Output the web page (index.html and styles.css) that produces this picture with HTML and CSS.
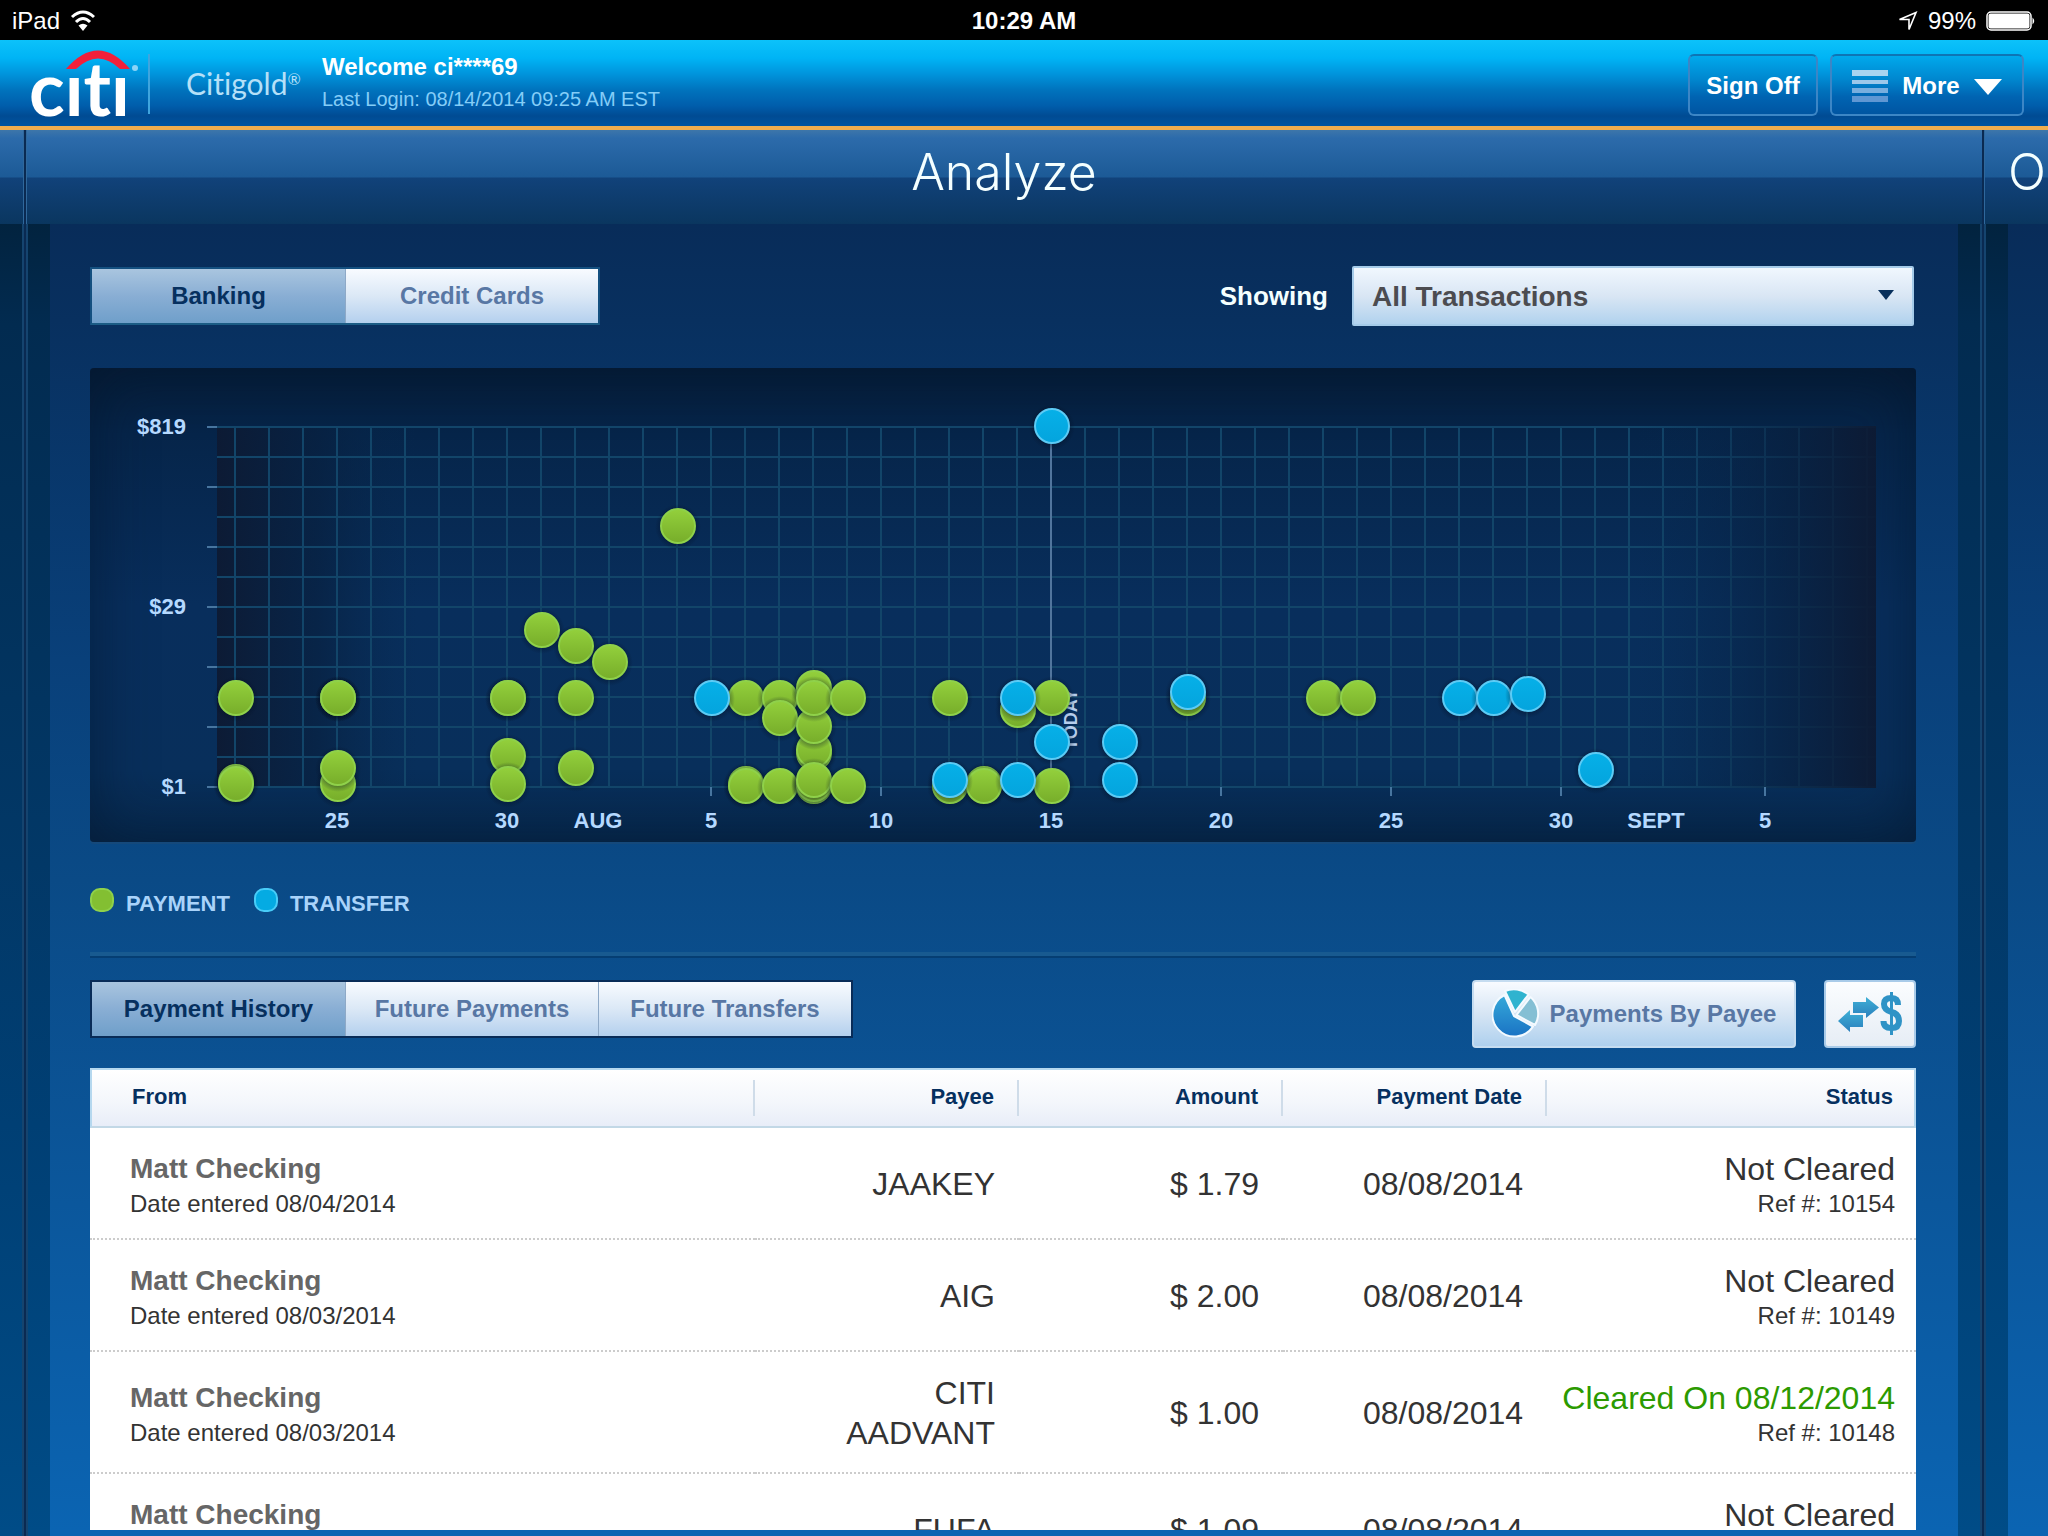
FILE: index.html
```html
<!DOCTYPE html>
<html lang="en">
<head>
<meta charset="utf-8">
<meta name="viewport" content="width=device-width, initial-scale=1">
<title>Citi - Analyze</title>
<link rel="stylesheet" href="styles.css">
</head>
<body>
<div class="status-bar">
  <div class="status-left">
    <span>iPad</span>
    <svg width="26" height="24" viewBox="0 0 26 24" fill="none" stroke="#fff" stroke-width="3" aria-hidden="true">
      <path d="M2 8Q13 -2 24 8"/><path d="M6 13Q13 6 20 13"/><path d="M13 22L8.500 16.500Q13 13 17.500 16.500Z" fill="#fff" stroke="none"/>
    </svg>
  </div>
  <div class="status-time">10:29 AM</div>
  <div class="status-right">
    <svg width="20" height="20" viewBox="0 0 20 20" fill="none" stroke="#fff" stroke-width="1.600" aria-hidden="true"><path d="M1.500 8.500L18 1.500L11 18.500V8.500Z"/></svg>
    <span>99%</span>
    <svg width="50" height="20" viewBox="0 0 50 20" aria-hidden="true"><rect x="1" y="1" width="44" height="18" rx="4" fill="none" stroke="#fff" stroke-width="1.500"/><rect x="2.500" y="2.500" width="41" height="15" rx="2" fill="#fff"/><path d="M46.500 6.500Q50 10 46.500 13.500Z" fill="#fff"/></svg>
  </div>
</div>

<header class="app-header">
  <svg class="logo" width="126" height="80" viewBox="0 0 126 80" role="img" aria-label="Citi">
    <path d="M42 24Q74 -13 106 24L96 24Q74 3 52 24Z" fill="#f2203a"/>
    <text x="5" y="71" class="logo-text">cıtı</text>
    <circle cx="111" cy="23" r="3" fill="#8bd4f7"/>
    <path d="M125 9V69" stroke="#3fa5de" stroke-width="2"/>
  </svg>
  <span class="brand">Citigold<sup>®</sup></span>
  <div class="welcome">
    <strong>Welcome ci****69</strong>
    <span>Last Login: 08/14/2014 09:25 AM EST</span>
  </div>
  <div class="header-actions">
    <button type="button" class="header-button">Sign Off</button>
    <button type="button" class="header-button more">
      <svg width="36" height="33" viewBox="0 0 36 33" aria-hidden="true"><path d="M0 0H36V6H0Z" fill="#a8d4f0"/><path d="M0 10H36V14H0Z" fill="#9cc8ea"/><path d="M0 18H36V23H0Z" fill="#78aede"/><path d="M0 26H36V32H0Z" fill="#5f97d3"/></svg>
      More
      <svg width="28" height="17" viewBox="0 0 28 17" aria-hidden="true"><path d="M0 1H28L14 17Z" fill="#fff"/></svg>
    </button>
  </div>
</header>

<div class="carousel">
  <div class="page previous"><div class="page-head"></div><div class="gutter line-right"></div></div>
  <main class="page">
    <div class="page-head"><h1>Analyze</h1></div>
    <div class="page-body">
      <div class="gutter line-left"></div>
      <div class="content">
        <div class="toolbar">
          <div class="tabs" role="group" aria-label="Account type">
            <button type="button" class="tab active">Banking</button>
            <button type="button" class="tab">Credit Cards</button>
          </div>
          <div class="filter">
            <label for="showing">Showing</label>
            <div class="select-box">
              <select id="showing"><option>All Transactions</option></select>
              <svg width="16" height="10" viewBox="0 0 16 10" aria-hidden="true"><path d="M0 0H16L8 10Z" fill="#08305c"/></svg>
            </div>
          </div>
        </div>

        <div class="chart">
          <svg viewBox="0 0 1826 474" role="img" aria-label="Transactions by date and amount">
            <defs>
              <linearGradient id="green" x1="0" y1="0" x2="0" y2="1"><stop offset="0" stop-color="#93d03c"/><stop offset="1" stop-color="#77ad2a"/></linearGradient>
              <linearGradient id="blue" x1="0" y1="0" x2="0" y2="1"><stop offset="0" stop-color="#06b0e8"/><stop offset="1" stop-color="#04a4dd"/></linearGradient>
              <radialGradient id="shade"><stop offset=".7" stop-color="#020e22" stop-opacity=".4"/><stop offset="1" stop-color="#020e22" stop-opacity="0"/></radialGradient>
              <linearGradient id="fadeLeft"><stop offset="0" stop-color="#0d1a33" stop-opacity=".95"/><stop offset=".5" stop-color="#08203f" stop-opacity=".7"/><stop offset="1" stop-color="#072a50" stop-opacity="0"/></linearGradient>
              <linearGradient id="fadeRight"><stop offset="0" stop-color="#072a50" stop-opacity="0"/><stop offset=".6" stop-color="#08203f" stop-opacity=".6"/><stop offset="1" stop-color="#0d1a33" stop-opacity=".95"/></linearGradient>
              <pattern id="columns" x="144" y="59" width="34" height="30" patternUnits="userSpaceOnUse"><path d="M1 0V30" stroke="#124569" stroke-width="2"/></pattern>
              <pattern id="rows" x="0" y="58" width="34" height="30" patternUnits="userSpaceOnUse"><path d="M0 1H34" stroke="#124569" stroke-width="2"/></pattern>
              <g id="p"><circle r="23" cx="1" cy="1" fill="url(#shade)"/><circle cx="1" r="17" fill="url(#green)" stroke="#8fd14a" stroke-width="2"/></g>
              <g id="t"><circle r="23" cx="1" cy="1" fill="url(#shade)"/><circle cx="1" r="17" fill="url(#blue)" stroke="#5ccbf5" stroke-width="2"/></g>
            </defs>
            <rect x="127" y="59" width="200" height="360" fill="url(#fadeLeft)"/>
            <rect x="127" y="59" width="1659" height="360" fill="url(#columns)"/>
            <rect x="127" y="58" width="1659" height="362" fill="url(#rows)"/>
            <rect x="1546" y="58" width="240" height="362" fill="url(#fadeRight)"/>
            <path d="M117 59H127M117 119H127M117 179H127M117 239H127M117 299H127M117 359H127M117 419H127" class="ticks"/>
            <path d="M621 419V428M791 419V428M961 419V428M1131 419V428M1301 419V428M1471 419V428M1675 419V428" class="ticks"/>
            <path d="M961 59V419" stroke="#51759d" stroke-width="2"/>
            <text transform="translate(987 382) rotate(-90)" class="today">TODAY</text>
            <g class="axis end"><text x="96" y="66">$819</text><text x="96" y="246">$29</text><text x="96" y="426">$1</text></g>
            <g class="axis mid"><text x="247" y="460">25</text><text x="417" y="460">30</text><text x="508" y="460">AUG</text><text x="621" y="460">5</text><text x="791" y="460">10</text><text x="961" y="460">15</text><text x="1131" y="460">20</text><text x="1301" y="460">25</text><text x="1471" y="460">30</text><text x="1566" y="460">SEPT</text><text x="1675" y="460">5</text></g>
            <g>
              <use href="#p" x="145" y="330"/><use href="#p" x="145" y="414"/><use href="#p" x="145" y="416"/>
              <use href="#p" x="247" y="330"/><use href="#p" x="247" y="330"/><use href="#p" x="247" y="330"/><use href="#p" x="247" y="416"/><use href="#p" x="247" y="400"/>
              <use href="#p" x="417" y="330"/><use href="#p" x="417" y="330"/><use href="#p" x="417" y="388"/><use href="#p" x="417" y="416"/>
              <use href="#p" x="451" y="262"/>
              <use href="#p" x="485" y="278"/><use href="#p" x="485" y="330"/><use href="#p" x="485" y="400"/>
              <use href="#p" x="519" y="294"/><use href="#p" x="587" y="158"/>
              <use href="#p" x="655" y="330"/><use href="#p" x="655" y="416"/><use href="#p" x="655" y="418"/>
              <use href="#p" x="689" y="330"/><use href="#p" x="689" y="350"/><use href="#p" x="689" y="418"/>
              <use href="#p" x="723" y="320"/><use href="#p" x="723" y="385"/><use href="#p" x="723" y="382"/><use href="#p" x="723" y="358"/><use href="#p" x="723" y="330"/><use href="#p" x="723" y="418"/><use href="#p" x="723" y="416"/><use href="#p" x="723" y="412"/>
              <use href="#p" x="757" y="330"/><use href="#p" x="757" y="418"/>
              <use href="#p" x="859" y="330"/><use href="#p" x="859" y="418"/>
              <use href="#p" x="893" y="416"/><use href="#p" x="893" y="418"/>
              <use href="#p" x="927" y="342"/>
              <use href="#p" x="961" y="330"/><use href="#p" x="961" y="418"/>
              <use href="#p" x="1097" y="330"/><use href="#p" x="1233" y="330"/><use href="#p" x="1267" y="330"/>
            </g>
            <g>
              <use href="#t" x="621" y="330"/><use href="#t" x="859" y="412"/><use href="#t" x="927" y="330"/><use href="#t" x="927" y="412"/>
              <use href="#t" x="961" y="58"/><use href="#t" x="961" y="374"/><use href="#t" x="1029" y="374"/><use href="#t" x="1029" y="412"/>
              <use href="#t" x="1097" y="324"/><use href="#t" x="1369" y="330"/><use href="#t" x="1403" y="330"/><use href="#t" x="1437" y="326"/><use href="#t" x="1505" y="402"/>
            </g>
          </svg>
        </div>

        <ul class="legend">
          <li><span class="swatch payment"></span>PAYMENT</li>
          <li><span class="swatch transfer"></span>TRANSFER</li>
        </ul>
        <hr>

        <div class="toolbar lower">
          <div class="tabs dark" role="group" aria-label="Activity">
            <button type="button" class="tab active">Payment History</button>
            <button type="button" class="tab">Future Payments</button>
            <button type="button" class="tab">Future Transfers</button>
          </div>
          <div class="tools">
            <button type="button" class="tool payee">
              <svg width="48" height="50" viewBox="0 0 48 50" aria-hidden="true">
                <defs><linearGradient id="pie" x1="0" y1="0" x2="0" y2="1"><stop offset="0" stop-color="#36a9d9"/><stop offset="1" stop-color="#1a73c4"/></linearGradient></defs>
                <g stroke="#f4faff" stroke-width="2" stroke-linejoin="round"><path d="M22 27L12.500 6A22 22 0 1 0 41 37.500Z" fill="url(#pie)"/><path d="M23 23L13 2A23 23 0 0 1 36.500 5.500Z" fill="#2fb3cf"/><path d="M24.500 26L38.500 8A22 22 0 0 1 43 36Z" fill="#84bfd4"/></g>
              </svg>
              Payments By Payee
            </button>
            <button type="button" class="tool money" aria-label="Transfer money">
              <svg width="64" height="44" viewBox="0 0 64 44" aria-hidden="true">
                <defs><linearGradient id="tone" x1="0" y1="0" x2="0" y2="1"><stop offset="0" stop-color="#3fb0d6"/><stop offset="1" stop-color="#2a7fbd"/></linearGradient></defs>
                <path d="M15 10H28V5L41 15.500L28 26V21H15Z" fill="url(#tone)"/><path d="M25 23V35H12V40L0 29L12 18V23Z" fill="url(#tone)"/>
                <path d="M60 13Q60 6 53.500 6Q46 6 46 12Q46 18 53.500 20Q61 22 61 29Q61 36 53.500 36Q45.500 36 45.500 29" fill="none" stroke="#2f93c6" stroke-width="6"/><path d="M53.500 0V43" stroke="#2f93c6" stroke-width="3"/>
              </svg>
            </button>
          </div>
        </div>

        <div class="table-view">
          <table>
            <colgroup><col><col class="c-col"><col class="c-col"><col class="c-col"><col class="c-status"></colgroup>
            <thead><tr><th scope="col">From</th><th scope="col">Payee</th><th scope="col">Amount</th><th scope="col">Payment Date</th><th scope="col">Status</th></tr></thead>
            <tbody>
              <tr><td><b>Matt Checking</b><small>Date entered 08/04/2014</small></td><td>JAAKEY</td><td>$ 1.79</td><td>08/08/2014</td><td><span>Not Cleared</span><small>Ref #: 10154</small></td></tr>
              <tr><td><b>Matt Checking</b><small>Date entered 08/03/2014</small></td><td>AIG</td><td>$ 2.00</td><td>08/08/2014</td><td><span>Not Cleared</span><small>Ref #: 10149</small></td></tr>
              <tr><td><b>Matt Checking</b><small>Date entered 08/03/2014</small></td><td>CITI AADVANT</td><td>$ 1.00</td><td>08/08/2014</td><td><span class="cleared">Cleared On 08/12/2014</span><small>Ref #: 10148</small></td></tr>
              <tr><td><b>Matt Checking</b><small>Date entered 08/03/2014</small></td><td>FUFA</td><td>$ 1.09</td><td>08/08/2014</td><td><span>Not Cleared</span><small>Ref #: 10147</small></td></tr>
            </tbody>
          </table>
        </div>
      </div>
      <div class="gutter line-right"></div>
    </div>
  </main>
  <div class="page next">
    <div class="page-head"><h2>O</h2></div>
    <div class="gutter line-left"></div>
  </div>
</div>
</body>
</html>
```
FILE: styles.css
```css
* { box-sizing: border-box; }

body {
  margin: 0;
  height: 100vh;
  display: flex;
  flex-direction: column;
  overflow: hidden;
  font-family: "Liberation Sans", Arial, sans-serif;
  font-size: 24px;
  color: #333;
  background: #0b4a86;
}

button, select { font: inherit; }
button { cursor: pointer; }

/* Device status bar */
.status-bar {
  display: grid;
  grid-template-columns: 1fr auto 1fr;
  align-items: center;
  height: 40px;
  padding: 2px 12px 0;
  background: #000;
  color: #fff;
}
.status-left, .status-right { display: flex; align-items: center; gap: 10px; }
.status-right { justify-content: flex-end; }
.status-time { font-weight: bold; }

/* Application header */
.app-header {
  display: flex;
  align-items: center;
  height: 90px;
  padding: 4px 24px 0;
  border-bottom: 4px solid #f0ad4e;
  background: linear-gradient(#0cc2fa 0, #00b4f5 18px, #0094dc 34px, #0073bd 50px, #005dab 66px, #004b93 76px, #0054a0 86px);
  color: #fff;
}
.logo { flex: none; overflow: visible; }
.logo-text { font: bold 74px Lato, sans-serif; font-variant-ligatures: none; fill: #fff; }
.brand {
  width: 134px;
  margin-left: 36px;
  padding-bottom: 4px;
  font: 30px/40px Lato, sans-serif;
  font-variant-ligatures: none;
  color: #b5e0f8;
  white-space: nowrap;
}
.brand sup { font-size: 16px; line-height: 0; vertical-align: 10px; }
.welcome { display: flex; flex-direction: column; padding-bottom: 5px; margin-left: 2px; line-height: 33px; }
.welcome span { font-size: 20px; color: #84cdf7; }
.header-actions { display: flex; gap: 12px; margin-left: auto; }
.header-button {
  display: flex;
  align-items: center;
  justify-content: center;
  gap: 14px;
  width: 130px;
  height: 62px;
  padding: 2px 0 0;
  border: 2px solid #3c86c6;
  border-top-color: #0e75b5;
  border-radius: 6px;
  background: linear-gradient(#00a9ec, #0087cf 40%, #0064b2 70%, #0055a2);
  color: #fff;
  font-weight: bold;
}
.more { width: 194px; }

/* Swipeable pages */
.carousel {
  flex: 1;
  min-height: 0;
  display: grid;
  grid-template-columns: 24px minmax(0, 1fr) 66px;
  background: linear-gradient(#082c59 94px, #08305f 190px, #09407a 530px, #0a4a86 750px, #0b5497 1000px, #0b64b2 1400px);
}
.page { display: flex; flex-direction: column; min-width: 0; min-height: 0; overflow: hidden; }
.page + .page { border-left: 2px solid #0a2a52; }
.page-head {
  flex: none;
  height: 94px;
  padding-top: 14px;
  text-align: center;
  background: linear-gradient(#3d76aa 0, #2c6bab 8px, #1c5a96 47px, #11427a 48px, #0a365f 94px);
  box-shadow: inset 1px 0 #2f689c;
  color: #f4ffff;
}
.previous .page-head { box-shadow: inset -1px 0 #2f689c; }
.page-head h1, .page-head h2 { margin: 0; font: 300 50px/56px Inter, sans-serif; }
.page-head h2 { padding-left: 24px; text-align: left; }
.page-body { flex: 1; min-height: 0; display: grid; grid-template-columns: 24px minmax(0, 1fr) 24px; }
.gutter {
  width: 24px;
  flex: 1;
  background: linear-gradient(#02233f, #022b50 100px, #023867 640px, #003f74 900px, #004c87 1310px);
}
.line-left { box-shadow: inset 2px 0 #15446f; }
.line-right { box-shadow: inset -2px 0 #15446f; }
.content { display: flex; flex-direction: column; min-width: 0; min-height: 0; padding: 42px 42px 6px 40px; }

/* Toolbars */
.toolbar { flex: none; display: flex; align-items: center; justify-content: space-between; height: 60px; }
.lower { align-items: flex-start; height: 68px; }
.tabs { display: flex; border: 2px solid #145080; border-bottom-color: #1b5c85; }
.tabs.dark { border-color: #092c58; }
.tab {
  width: 253px;
  height: 54px;
  padding: 0;
  border: 0;
  background: linear-gradient(#f8fbff, #dbe8f6 50%, #b4d0ee);
  color: #5877a4;
  font-weight: bold;
}
.tab + .tab { border-left: 1px solid #8ea9c7; }
.tab.active { background: linear-gradient(#a9c5df, #89aed4 50%, #6f9fca); color: #06305f; }

.filter { display: flex; align-items: center; gap: 24px; margin-right: 2px; }
.filter label { font-size: 26px; font-weight: bold; color: #f4ffff; }
.select-box { position: relative; width: 562px; height: 60px; }
.select-box select {
  appearance: none;
  width: 100%;
  height: 100%;
  padding: 0 18px;
  border: 2px solid #a5cbe9;
  border-radius: 2px;
  background: linear-gradient(#f0f7fe, #d9e6f4 50%, #b1d2ee);
  color: #4c4c50;
  font-size: 28px;
  font-weight: bold;
}
.select-box svg { position: absolute; right: 20px; top: 24px; pointer-events: none; }

/* Chart */
.chart {
  flex: none;
  margin-top: 42px;
  border-radius: 4px;
  background: linear-gradient(#061d39, #06254a 14%, #082e5c 50%, #082f5b 85%, #07294e);
  box-shadow: inset 0 0 60px rgba(4, 21, 43, .6), 0 2px #15497b;
}
.chart svg { display: block; width: 100%; height: auto; }
.axis { font-size: 22px; font-weight: bold; fill: #b5d9ff; }
.end { text-anchor: end; }
.mid { text-anchor: middle; }
.today { font-size: 18px; font-weight: bold; fill: #b5cdec; }
.ticks { stroke: #47759f; stroke-width: 2; }

.legend {
  flex: none;
  display: flex;
  gap: 24px;
  margin: 44px 0 0;
  padding: 0;
  list-style: none;
  font-size: 22px;
  font-weight: bold;
  line-height: 36px;
  height: 28px;
  color: #a9d3fa;
}
.legend li { display: flex; gap: 12px; }
.swatch { width: 24px; height: 24px; margin-top: 2px; border: 2px solid #8fd14a; border-radius: 10px; }
.payment { background: #83bf32; }
.transfer { border-color: #48ccf8; background: #04abe3; }
hr { flex: none; width: 100%; height: 6px; margin: 38px 0 22px; border: 0; border-top: 4px solid #185a90; border-bottom: 2px solid #053e73; }

.tools { display: flex; gap: 28px; }
.tool {
  display: flex;
  align-items: center;
  justify-content: center;
  gap: 10px;
  height: 68px;
  padding: 0;
  border: 2px solid #c5dcf0;
  border-radius: 4px;
  color: #5877a4;
  font-weight: bold;
}
.payee { width: 324px; background: linear-gradient(#f8fbff, #d6e5f4 50%, #aed0ee); }
.money { width: 92px; border-color: #a9cbe9; background: linear-gradient(#fbfdff, #e6edf5); }

/* Transactions */
.table-view { flex: 1; min-height: 0; margin-top: 20px; overflow: hidden; background: #fff; }
table { width: 100%; table-layout: fixed; border-collapse: separate; border-spacing: 0; }
.c-col { width: 264px; }
.c-status { width: 369px; }
th {
  height: 60px;
  padding: 0 25px 2px;
  border-top: 2px solid #b5d8ef;
  border-bottom: 2px solid #c2d8e6;
  background:
    linear-gradient(#cfdce9, #cfdce9) right 10px / 2px 36px no-repeat,
    linear-gradient(#fff, #f3f6fb 60%, #e8edf8);
  color: #06305f;
  font-size: 22px;
  text-align: right;
}
th:last-child { background: linear-gradient(#fff, #f3f6fb 60%, #e8edf8); border-right: 2px solid #b5d8ef; padding-right: 21px; }
td { padding: 21px 24px 19px 80px; border-bottom: 2px dotted #ccc; font-size: 32px; line-height: 40px; text-align: right; }
th:first-child { padding-left: 40px; border-left: 2px solid #b5d8ef; text-align: left; }
td:first-child { padding-left: 40px; text-align: left; }
td:last-child { padding-left: 0; padding-right: 21px; }
td b, td span, td small { display: block; }
td b { font-size: 28px; color: #666; }
td small { font-size: 24px; line-height: 30px; }
.cleared { color: #2c9a00; }
```
